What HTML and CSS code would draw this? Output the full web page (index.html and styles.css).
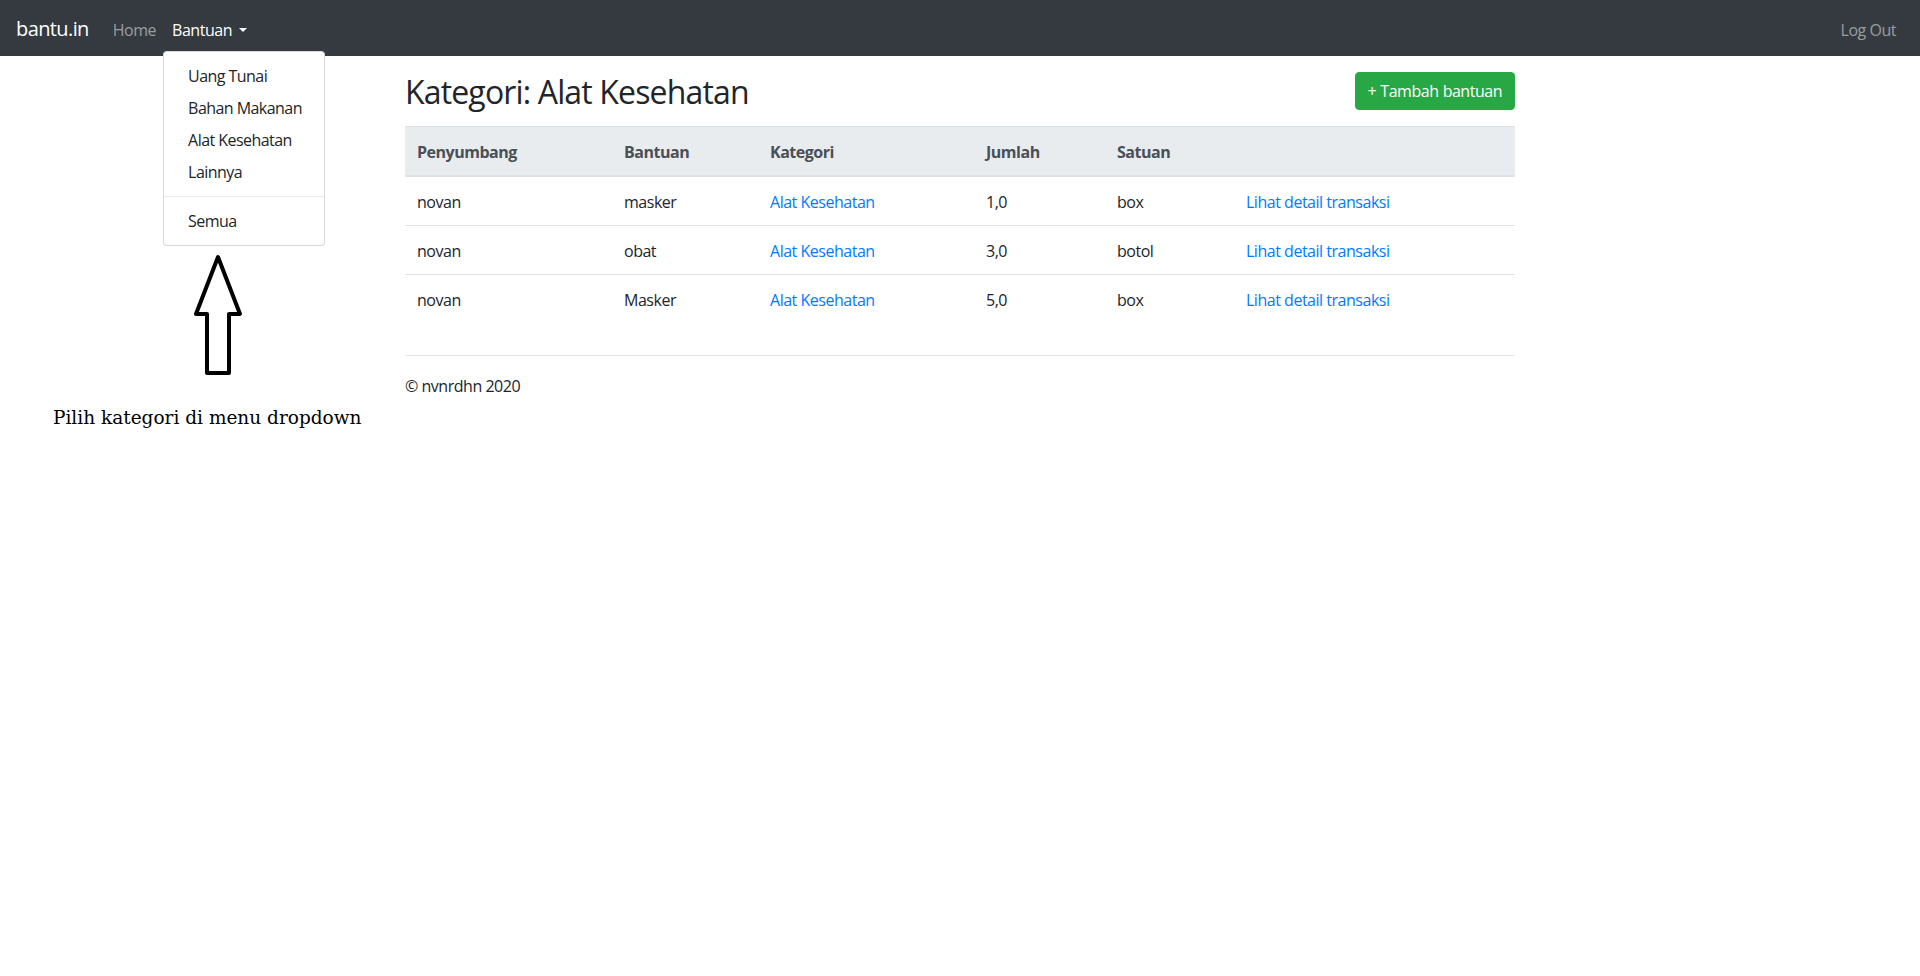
FILE: index.html
```html
<!DOCTYPE html>
<html lang="id">
<head>
<meta charset="utf-8">
<title>bantu.in</title>
<link rel="stylesheet" href="styles.css">
</head>
<body>
<nav class="navbar">
  <a class="brand" href="#">bantu.in</a>
  <ul class="nav">
    <li class="nav-item"><a class="nav-link" href="#">Home</a></li>
    <li class="nav-item dropdown">
      <a class="nav-link nav-link-open" href="#">Bantuan<span class="caret"></span></a>
      <div class="dropdown-menu">
        <a class="dropdown-item" href="#">Uang Tunai</a>
        <a class="dropdown-item" href="#">Bahan Makanan</a>
        <a class="dropdown-item" href="#">Alat Kesehatan</a>
        <a class="dropdown-item" href="#">Lainnya</a>
        <div class="dropdown-divider"></div>
        <a class="dropdown-item" href="#">Semua</a>
      </div>
    </li>
  </ul>
  <ul class="nav nav-right">
    <li class="nav-item"><a class="nav-link" href="#">Log Out</a></li>
  </ul>
</nav>

<main class="container">
  <div class="page-head">
    <h2 class="page-title">Kategori: Alat Kesehatan</h2>
    <a class="btn-success" href="#">+ Tambah bantuan</a>
  </div>
  <table class="table">
    <thead>
      <tr>
        <th class="c1">Penyumbang</th>
        <th class="c2">Bantuan</th>
        <th class="c3">Kategori</th>
        <th class="c4">Jumlah</th>
        <th class="c5">Satuan</th>
        <th class="c6"></th>
      </tr>
    </thead>
    <tbody>
      <tr>
        <td>novan</td><td>masker</td><td><a href="#">Alat Kesehatan</a></td><td>1,0</td><td>box</td><td><a href="#">Lihat detail transaksi</a></td>
      </tr>
      <tr>
        <td>novan</td><td>obat</td><td><a href="#">Alat Kesehatan</a></td><td>3,0</td><td>botol</td><td><a href="#">Lihat detail transaksi</a></td>
      </tr>
      <tr>
        <td>novan</td><td>Masker</td><td><a href="#">Alat Kesehatan</a></td><td>5,0</td><td>box</td><td><a href="#">Lihat detail transaksi</a></td>
      </tr>
    </tbody>
  </table>
  <hr class="rule">
  <footer class="footer">© nvnrdhn 2020</footer>
</main>

<div class="annotation">
  <svg class="arrow" width="60" height="130" viewBox="0 0 60 130">
    <polygon points="28,5 50,62 39,62 39,121 17,121 17,62 6,62" fill="none" stroke="#000" stroke-width="4" stroke-linejoin="round"/>
  </svg>
  <p class="annotation-text">Pilih kategori di menu dropdown</p>
</div>
</body>
</html>
```
FILE: styles.css
```css
* { box-sizing: border-box; }

html, body {
  margin: 0;
  padding: 0;
}

body {
  font-family: "Open Sans", "Noto Sans", sans-serif;
  font-size: 16px;
  line-height: 24px;
  color: #212529;
  background: #fff;
  letter-spacing: -0.48px;
  position: relative;
  min-height: 976px;
}

a { text-decoration: none; }

/* Navbar */
.navbar {
  height: 56px;
  background: #343a40;
  display: flex;
  align-items: flex-start;
  padding: 10px 16px 6px;
}

.brand {
  color: #fff;
  font-size: 20px;
  line-height: 30px;
  padding: 4px 0 6px;
  margin-right: 16px;
  letter-spacing: -0.6px;
}

.nav {
  list-style: none;
  margin: 0;
  padding: 0;
  display: flex;
}

.nav-right { margin-left: auto; }

.nav-item { position: relative; }

.nav-link {
  display: block;
  padding: 8px;
  color: rgba(255, 255, 255, 0.5);
}

.nav-link-open { color: #fff; }

.caret {
  display: inline-block;
  margin-left: 7px;
  vertical-align: 4px;
  border-top: 4.8px solid #fff;
  border-left: 4.8px solid transparent;
  border-right: 4.8px solid transparent;
}

.dropdown-menu {
  position: absolute;
  top: 100%;
  left: -1px;
  margin-top: 1px;
  min-width: 161px;
  padding: 8px 0;
  background: #fff;
  border: 1px solid rgba(0, 0, 0, 0.15);
  border-radius: 4px;
  z-index: 10;
}

.dropdown-item {
  display: block;
  padding: 4px 22px 4px 24px;
  color: #212529;
  white-space: nowrap;
  letter-spacing: -0.55px;
}

.dropdown-divider {
  height: 0;
  margin: 8px 0;
  border-top: 1px solid #e9ecef;
}

/* Main */
.container {
  width: 1140px;
  margin: 16px auto 0;
  padding: 0 15px;
}

.page-head {
  display: flex;
  justify-content: space-between;
  align-items: flex-start;
  margin-bottom: 16px;
}

.page-title {
  margin: 0;
  padding-top: 1px;
  font-size: 32px;
  line-height: 37px;
  font-weight: 400;
  letter-spacing: -0.85px;
}

.btn-success {
  display: inline-block;
  height: 38px;
  padding: 6px 12px;
  background: #28a745;
  border: 1px solid #28a745;
  border-radius: 4px;
  color: #fff;
  line-height: 24px;
  word-spacing: 0.5px;
}

.table {
  width: 100%;
  border-collapse: collapse;
  margin-bottom: 32px;
  table-layout: fixed;
}

.table th,
.table td {
  padding: 12px;
  text-align: left;
  vertical-align: top;
  border-top: 1px solid #dee2e6;
}

.table td { padding-top: 13px; padding-bottom: 11px; }

.table thead th {
  background: #e9ecef;
  color: #495057;
  font-weight: 700;
  border-bottom: 2px solid #dee2e6;
  padding-top: 13px;
  padding-bottom: 11px;
}

.table a { color: #007bff; }

.c1 { width: 207px; }
.c2 { width: 146px; }
.c3 { width: 216px; }
.c4 { width: 131px; }
.c5 { width: 129px; }
.c6 { width: 281px; }

.rule {
  margin: 0 0 16px;
  border: 0;
  border-top: 1px solid rgba(0, 0, 0, 0.1);
}

.footer { padding: 2px 0 14px; }

/* Annotation overlay */
.annotation {
  position: absolute;
  left: 0;
  top: 252px;
  width: 420px;
}

.arrow {
  display: block;
  margin-left: 190px;
}

.annotation-text {
  margin: 24px 0 0 53px;
  font-family: "DejaVu Serif", "Liberation Serif", serif;
  font-size: 18.5px;
  line-height: 24px;
  letter-spacing: 0;
  color: #000;
}
```
